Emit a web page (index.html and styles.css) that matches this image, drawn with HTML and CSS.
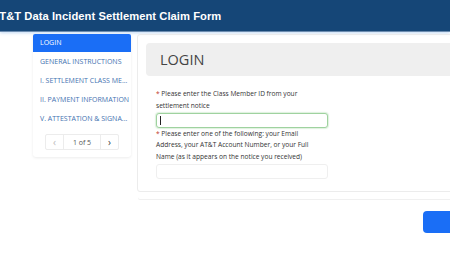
FILE: index.html
```html
<!DOCTYPE html>
<html>
<head>
<meta charset="utf-8">
<link rel="stylesheet" href="styles.css">
</head>
<body>
<header class="topbar">
  <h1 class="title">AT&amp;T Data Incident Settlement Claim Form</h1>
</header>
<div class="page">
  <nav class="sidebar">
    <ul class="steps">
      <li class="step active">LOGIN</li>
      <li class="step">GENERAL INSTRUCTIONS</li>
      <li class="step">I. SETTLEMENT CLASS ME...</li>
      <li class="step">II. PAYMENT INFORMATION</li>
      <li class="step">V. ATTESTATION &amp; SIGNA...</li>
    </ul>
    <div class="pager">
      <span class="pg-btn prev">&#8249;</span>
      <span class="pg-count">1 of 5</span>
      <span class="pg-btn next">&#8250;</span>
    </div>
  </nav>
  <div class="main">
    <section class="card">
      <div class="card-title">LOGIN</div>
      <div class="fields">
        <label class="field">
          <span class="label"><span class="req">*</span> Please enter the Class Member ID from your settlement notice</span>
          <span class="input-wrap focused"><span class="input green"></span></span>
        </label>
        <label class="field">
          <span class="label"><span class="req">*</span> Please enter one of the following: your Email Address, your AT&amp;T Account Number, or your Full Name (as it appears on the notice you received)</span>
          <span class="input-wrap"><span class="input plain"></span></span>
        </label>
      </div>
    </section>
    <div class="actions">
      <button class="btn-next" type="button"></button>
    </div>
  </div>
</div>
</body>
</html>
```
FILE: styles.css
```css
html, body {
  margin: 0;
  padding: 0;
  background: #fff;
  overflow: hidden;
  width: 450px;
  height: 280px;
}
body {
  font-family: "Open Sans", "Liberation Sans", sans-serif;
  color: #333;
}
.topbar {
  height: 31px;
  background: #154677;
  border-bottom: 1px solid #6d8db0;
  box-shadow: 0 1px 3px rgba(120, 170, 230, 0.45);
  display: flex;
  align-items: center;
  overflow: hidden;
}
.title {
  margin: 0 0 0 -8px;
  font-family: "Liberation Sans", Arial, sans-serif;
  font-weight: bold;
  font-size: 11.2px;
  color: #fff;
  white-space: nowrap;
  letter-spacing: 0.05px;
}
.page {
  display: flex;
  align-items: flex-start;
  padding: 2px 0 0 33px;
  gap: 6px;
  width: 600px;
}
.sidebar {
  width: 98px;
  flex: none;
  background: #fff;
  border-radius: 3px;
  box-shadow: 0 1px 3px rgba(0, 0, 0, 0.08);
  padding-bottom: 7px;
}
.steps {
  list-style: none;
  margin: 0;
  padding: 0;
}
.step {
  height: 19px;
  line-height: 19px;
  padding-left: 7px;
  font-size: 7px;
  color: #3f72b0;
  white-space: nowrap;
  overflow: hidden;
}
.step.active {
  height: 18px;
  line-height: 18px;
  background: #1a6ef6;
  color: #fff;
  border-radius: 2px 2px 0 0;
}
.pager {
  display: flex;
  margin: 6px 0 0 12px;
  width: 74px;
  height: 16px;
  border: 1px solid #ececec;
  border-radius: 2px;
  box-sizing: border-box;
  font-size: 7px;
  color: #555;
}
.pg-btn {
  width: 17px;
  display: flex;
  align-items: center;
  justify-content: center;
  font-size: 10px;
  color: #bbb;
}
.pg-btn.next {
  color: #444;
  border-left: 1px solid #ececec;
}
.pg-btn.prev {
  border-right: 1px solid #ececec;
}
.pg-count {
  flex: 1;
  display: flex;
  align-items: center;
  justify-content: center;
}
.main {
  width: 330px;
  flex: none;
}
.card {
  border: 1px solid #ececec;
  border-radius: 3px;
  padding: 8px 0 12px 8px;
  box-shadow: 0 8px 0 -1px #fff, 0 9px 0 -1px #f0f0f0;
}
.card-title {
  height: 33px;
  background: #efefef;
  border-radius: 4px 0 0 4px;
  margin-right: -40px;
  padding-left: 14px;
  display: flex;
  align-items: center;
  font-size: 14.5px;
  color: #444;
}
.fields {
  padding: 12px 0 0 10px;
  width: 172px;
}
.field {
  display: block;
}
.label {
  display: block;
  width: 160px;
  font-size: 6.6px;
  line-height: 11.8px;
  color: #333;
}
.req {
  color: #c0392b;
}
.input-wrap {
  display: block;
  position: relative;
  margin: 1px 0 0;
}
.input {
  display: block;
  width: 172px;
  height: 15px;
  box-sizing: border-box;
  border: 1px solid #efefef;
  border-radius: 3px;
  background: #fff;
}
.input.green {
  border-color: #9fd29f;
  box-shadow: 0 0 1px 1px rgba(160, 215, 160, 0.35);
}
.focused::after {
  content: "";
  position: absolute;
  left: 4px;
  top: 3px;
  width: 1px;
  height: 9px;
  background: #222;
}
.actions {
  display: flex;
  justify-content: flex-start;
  padding: 19px 0 0 286px;
}
.btn-next {
  width: 60px;
  height: 22px;
  border: none;
  border-radius: 4px;
  background: #1a6ef6;
  padding: 0;
}
```
